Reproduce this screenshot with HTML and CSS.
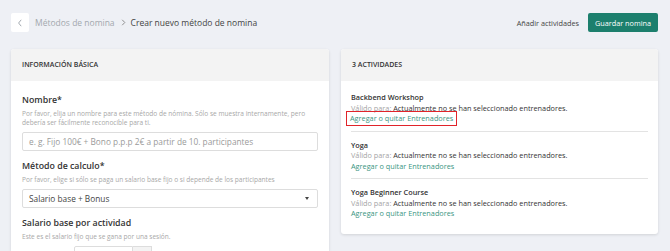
FILE: index.html
```html
<!DOCTYPE html>
<html lang="es">
<head>
  <meta charset="UTF-8">
  <title>Crear nuevo método de nomina</title>
  <link rel="stylesheet" href="styles.css">
</head>
<body>
  <div class="topbar">
    <div class="crumbs">
      <button class="back">
        <svg width="6" height="8" viewBox="0 0 6 8"><path d="M4.2 0.8 L1.6 4 L4.2 7.2" fill="none" stroke="#9aa0a8" stroke-width="0.9"/></svg>
      </button>
      <span class="crumb-parent">Métodos de nomina</span>
      <svg class="crumb-sep" width="5" height="7" viewBox="0 0 5 7"><path d="M1.2 0.8 L3.8 3.5 L1.2 6.2" fill="none" stroke="#777" stroke-width="0.8"/></svg>
      <span class="crumb-current">Crear nuevo método de nomina</span>
    </div>
    <div class="actions">
      <a class="plain-link">Añadir actividades</a>
      <button class="save">Guardar nomina</button>
    </div>
  </div>

  <div class="columns">
    <div class="card card-left">
      <div class="card-head">INFORMACIÓN BÁSICA</div>
      <div class="card-body">
        <div class="field">
          <label>Nombre*</label>
          <p class="help">Por favor, elija un nombre para este método de nómina. Sólo se muestra internamente, pero debería ser fácilmente reconocible para ti.</p>
          <div class="input placeholder">e. g. Fijo 100€ + Bono p.p.p 2€ a partir de 10. participantes</div>
        </div>
        <div class="field">
          <label>Método de calculo*</label>
          <p class="help">Por favor, elige si sólo se paga un salario base fijo o si depende de los participantes</p>
          <div class="input select">
            <span>Salario base + Bonus</span>
            <span class="caret"></span>
          </div>
        </div>
        <div class="field">
          <label>Salario base por actividad</label>
          <p class="help">Este es el salario fijo que se gana por una sesión.</p>
          <div class="money">
            <span class="money-label"></span>
            <div class="input small"></div>
            <span class="addon"></span>
          </div>
        </div>
      </div>
    </div>

    <div class="card card-right">
      <div class="card-head">3 ACTIVIDADES</div>
      <div class="card-body list">
        <div class="activity">
          <div class="act-name">Backbend Workshop</div>
          <div class="act-valid"><span class="muted">Válido para:</span> Actualmente no se han seleccionado entrenadores.</div>
          <a class="act-link boxed">Agregar o quitar Entrenadores</a>
        </div>
        <div class="activity">
          <div class="act-name">Yoga</div>
          <div class="act-valid"><span class="muted">Válido para:</span> Actualmente no se han seleccionado entrenadores.</div>
          <a class="act-link">Agregar o quitar Entrenadores</a>
        </div>
        <div class="activity">
          <div class="act-name">Yoga Beginner Course</div>
          <div class="act-valid"><span class="muted">Válido para:</span> Actualmente no se han seleccionado entrenadores.</div>
          <a class="act-link">Agregar o quitar Entrenadores</a>
        </div>
      </div>
    </div>
  </div>
</body>
</html>
```

FILE: styles.css
```css
body {
  margin: 0;
  padding: 13px 12px 0 11px;
  background-color: #eef0f5;
  font-family: "Open Sans", Arial, sans-serif;
  color: #333;
  height: 251px;
  box-sizing: border-box;
  overflow: hidden;
}

.topbar {
  display: flex;
  justify-content: space-between;
  align-items: center;
  height: 19px;
}

.crumbs {
  display: flex;
  align-items: center;
  font-size: 8.5px;
}

.back {
  width: 18px;
  height: 19px;
  border: none;
  border-radius: 2px;
  background-color: white;
  display: flex;
  align-items: center;
  justify-content: center;
  padding: 0;
  margin-right: 6px;
}

.crumb-parent {
  color: #a3a8ae;
}

.crumb-sep {
  margin: 0 5px 0 6px;
}

.crumb-current {
  color: #444;
}

.actions {
  display: flex;
  align-items: center;
}

.plain-link {
  font-size: 7.3px;
  color: #444;
  margin-right: 9px;
}

.save {
  background-color: #1c7f6d;
  color: white;
  border: none;
  border-radius: 2px;
  font-family: inherit;
  font-size: 7.3px;
  height: 19px;
  width: 70px;
  padding: 0;
}

.columns {
  display: flex;
  gap: 12px;
  margin-top: 17px;
  align-items: flex-start;
}

.card {
  background-color: white;
  border-radius: 3px;
  box-shadow: 0 1px 3px rgba(0, 0, 0, 0.12);
  overflow: hidden;
}

.card-left {
  width: 318px;
  height: 202px;
  border-radius: 3px 3px 0 0;
}

.card-right {
  width: 317px;
}

.card-head {
  background-color: #f3f3f3;
  height: 32px;
  line-height: 32px;
  padding-left: 11px;
  font-size: 7px;
  font-weight: 600;
  color: #333;
}

.card-body {
  padding: 12.5px 11px 0;
}

.field {
  margin-bottom: 8.5px;
}

.field label {
  display: block;
  font-size: 8.8px;
  font-weight: 600;
  color: #333;
  line-height: 13px;
}

.help {
  margin: 2px 0 5.5px;
  font-size: 6.55px;
  line-height: 9px;
  color: #a8a8a8;
}

.input {
  border: 1px solid #ddd;
  border-radius: 2px;
  height: 17px;
  line-height: 17px;
  padding: 0 6px;
  font-size: 8.3px;
  color: #444;
}

.placeholder {
  color: #9a9a9a;
}

.select {
  display: flex;
  justify-content: space-between;
  align-items: center;
}

.caret {
  width: 0;
  height: 0;
  border-left: 2.5px solid transparent;
  border-right: 2.5px solid transparent;
  border-top: 3px solid #444;
  margin-right: 2px;
}

.money {
  display: flex;
  align-items: center;
}

.money-label {
  width: 52px;
}

.small {
  width: 45px;
  border-radius: 2px 0 0 2px;
}

.addon {
  width: 19px;
  height: 19px;
  background-color: #f3f3f3;
  border: 1px solid #ddd;
  border-left: none;
  box-sizing: border-box;
}

.list {
  padding: 11px 10px 8px 10px;
}

.activity {
  border-bottom: 1px solid #e3e3e3;
  padding: 0 0 7px 0;
  margin-bottom: 8px;
  font-size: 7.3px;
  line-height: 10.5px;
}

.activity:last-child {
  border-bottom: none;
  margin-bottom: 0;
}

.act-name {
  font-weight: 600;
  color: #333;
}

.act-valid {
  color: #333;
}

.muted {
  color: #a5a5a5;
}

.act-link {
  display: inline-block;
  color: #3a9582;
}

.boxed {
  outline: 1.5px solid #e0242a;
  outline-offset: 0;
  padding: 1px 3px;
  margin: -1px 0 -1px -4px;
}
```
